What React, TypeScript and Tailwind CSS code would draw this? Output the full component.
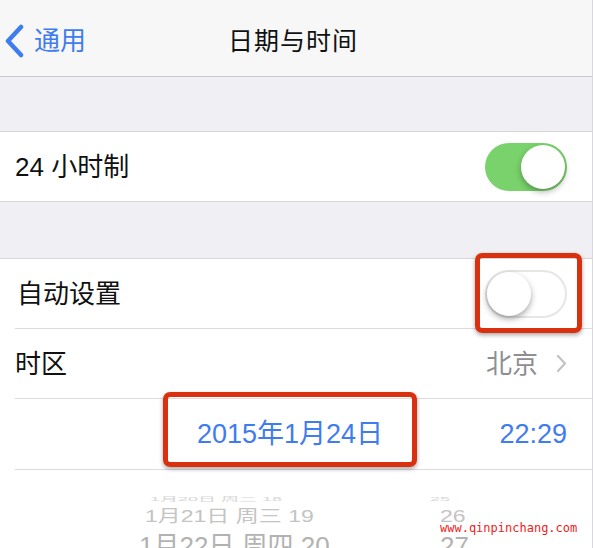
import React from "react";

const font = { fontFamily: '"Liberation Sans", "Noto Sans CJK SC", sans-serif' };

const Toggle = ({ on }: { on: boolean }) =>
  on ? (
    <div className="w-[82px] h-[48px] rounded-full bg-[#79d26b] flex items-center justify-end p-[2px]">
      <div className="w-[44px] h-[44px] rounded-full bg-white shadow-[0_3px_6px_rgba(0,0,0,0.3)]" />
    </div>
  ) : (
    <div className="w-[82px] h-[48px] rounded-full bg-white border-2 border-[#e6e6e6] flex items-center justify-start">
      <div className="w-[44px] h-[44px] rounded-full bg-white shadow-[0_3px_6px_rgba(0,0,0,0.35)]" />
    </div>
  );

export default function App() {
  return (
    <div
      className="relative w-[593px] h-[548px] overflow-hidden bg-[#efeff4] border-r border-[#d8d8dc]"
      style={font}
    >
      {/* nav bar */}
      <div className="relative h-[77px] bg-[#f7f7f7] border-b border-[#c8c7cc] flex items-center">
        <div className="flex items-center pl-[4px] pt-[6px] gap-[10px]">
          <svg width="20" height="34" viewBox="0 0 20 34">
            <path d="M17 3 L4 17 L17 31" fill="none" stroke="#3f7cf0" strokeWidth="4.5" strokeLinecap="round" strokeLinejoin="round" />
          </svg>
          <span className="text-[26px] text-[#3f7cf0] leading-none">通用</span>
        </div>
        <div className="absolute left-0 right-0 top-[6px] bottom-0 flex items-center justify-center">
          <span className="text-[25px] text-[#111] leading-none tracking-[1px] pr-[6px]">日期与时间</span>
        </div>
      </div>

      <div className="h-[54px]" />

      {/* 24h row */}
      <div className="h-[71px] bg-white border-y border-[#d6d6da] flex items-center justify-between pl-[15px] pr-[25px]">
        <span className="text-[26px] text-[#111] leading-none">24 小时制</span>
        <Toggle on />
      </div>

      <div className="h-[56px]" />

      <div className="bg-white border-t border-[#d6d6da]">
        <div className="ml-[15px] h-[70px] border-b border-[#dcdcdf] flex items-center justify-between pl-[2px] pr-[25px]">
          <span className="text-[26px] text-[#111] leading-none">自动设置</span>
          <Toggle on={false} />
        </div>
        <div className="ml-[15px] h-[70px] border-b border-[#dcdcdf] flex items-center justify-between pr-[25px]">
          <span className="text-[26px] text-[#111] leading-none">时区</span>
          <div className="flex items-center gap-[18px]">
            <span className="text-[26px] text-[#8e8e93] leading-none">北京</span>
            <svg width="11" height="19" viewBox="0 0 11 19">
              <path d="M2 2 L9 9.5 L2 17" fill="none" stroke="#c2c2c6" strokeWidth="2.2" strokeLinecap="round" strokeLinejoin="round" />
            </svg>
          </div>
        </div>
        <div className="ml-[15px] h-[71px] border-b border-[#dcdcdf] flex items-center pr-[25px]">
          <span className="ml-[182px] text-[27px] text-[#3f7cf0] leading-none">2015年1月24日</span>
          <span className="ml-auto text-[27px] text-[#3f7cf0] leading-none">22:29</span>
        </div>

        {/* picker */}
        <div className="h-[80px] relative">
          <div className="absolute left-[150px] top-[26px] flex items-center text-[18px] text-[#d6d6d6] leading-none scale-y-[0.3] origin-top">
            <span className="w-[200px]">1月20日 周二 18</span>
            <span className="ml-[80px]">25</span>
          </div>
          <div className="absolute left-[145px] top-[38px] flex items-end text-[23px] text-[#c4c4c4] leading-none scale-y-[0.75] origin-top">
            <span className="w-[200px]">1月21日 周三 19</span>
            <span className="ml-[95px]">26</span>
          </div>
          <div className="absolute left-[139px] top-[63px] flex items-end text-[26px] text-[#b2b2b2] leading-none">
            <span className="w-[205px]">1月22日 周四 20</span>
            <span className="ml-[96px]">27</span>
          </div>
          <div
            className="absolute left-[440px] top-[52px] text-[12px] text-[#ee1c1c] leading-none"
            style={{ fontFamily: '"DejaVu Sans Mono", "Liberation Mono", monospace' }}
          >
            www.qinpinchang.com
          </div>
        </div>
      </div>

      {/* red highlight boxes */}
      <div className="absolute left-[475px] top-[253px] w-[107px] h-[80px] border-[5px] border-[#d9300f] rounded-[7px] shadow-[0_2px_4px_rgba(0,0,0,0.35)]" />
      <div className="absolute left-[163px] top-[392px] w-[254px] h-[75px] border-[5px] border-[#d9300f] rounded-[7px] shadow-[0_2px_4px_rgba(0,0,0,0.35)]" />
    </div>
  );
}
